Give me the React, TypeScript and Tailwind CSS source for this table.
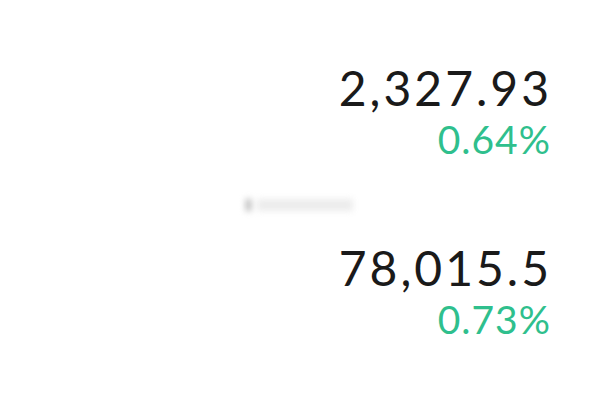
import React from "react";

function Quote({ value, change }: { value: string; change: string }) {
  return (
    <div className="flex flex-col items-end">
      <div className="text-[48px] leading-[56px] font-normal tracking-[3px] mr-[-1px] text-[#1a1a1a]">{value}</div>
      <div className="text-[39px] leading-[40px] mt-[3px] font-normal tracking-[1px] text-[#2fbf8d]">{change}</div>
    </div>
  );
}

export default function App() {
  return (
    <div
      className="w-[601px] h-[414px] bg-white relative overflow-hidden"
      style={{ fontFamily: "Lato, 'Open Sans', sans-serif" }}
    >
      <div className="flex flex-col items-end pr-[50px] pt-[60px]">
        <Quote value="2,327.93" change="0.64%" />
        <div className="h-[81px] w-full flex items-center justify-start pl-[246px] pt-[10px]">
          <div className="flex items-center gap-[6px] blur-[3px]">
            <div className="w-[5px] h-[12px] bg-[#b0b0b0]" />
            <div className="w-[96px] h-[12px] bg-[#ececec]" />
          </div>
        </div>
        <Quote value="78,015.5" change="0.73%" />
      </div>
    </div>
  );
}
